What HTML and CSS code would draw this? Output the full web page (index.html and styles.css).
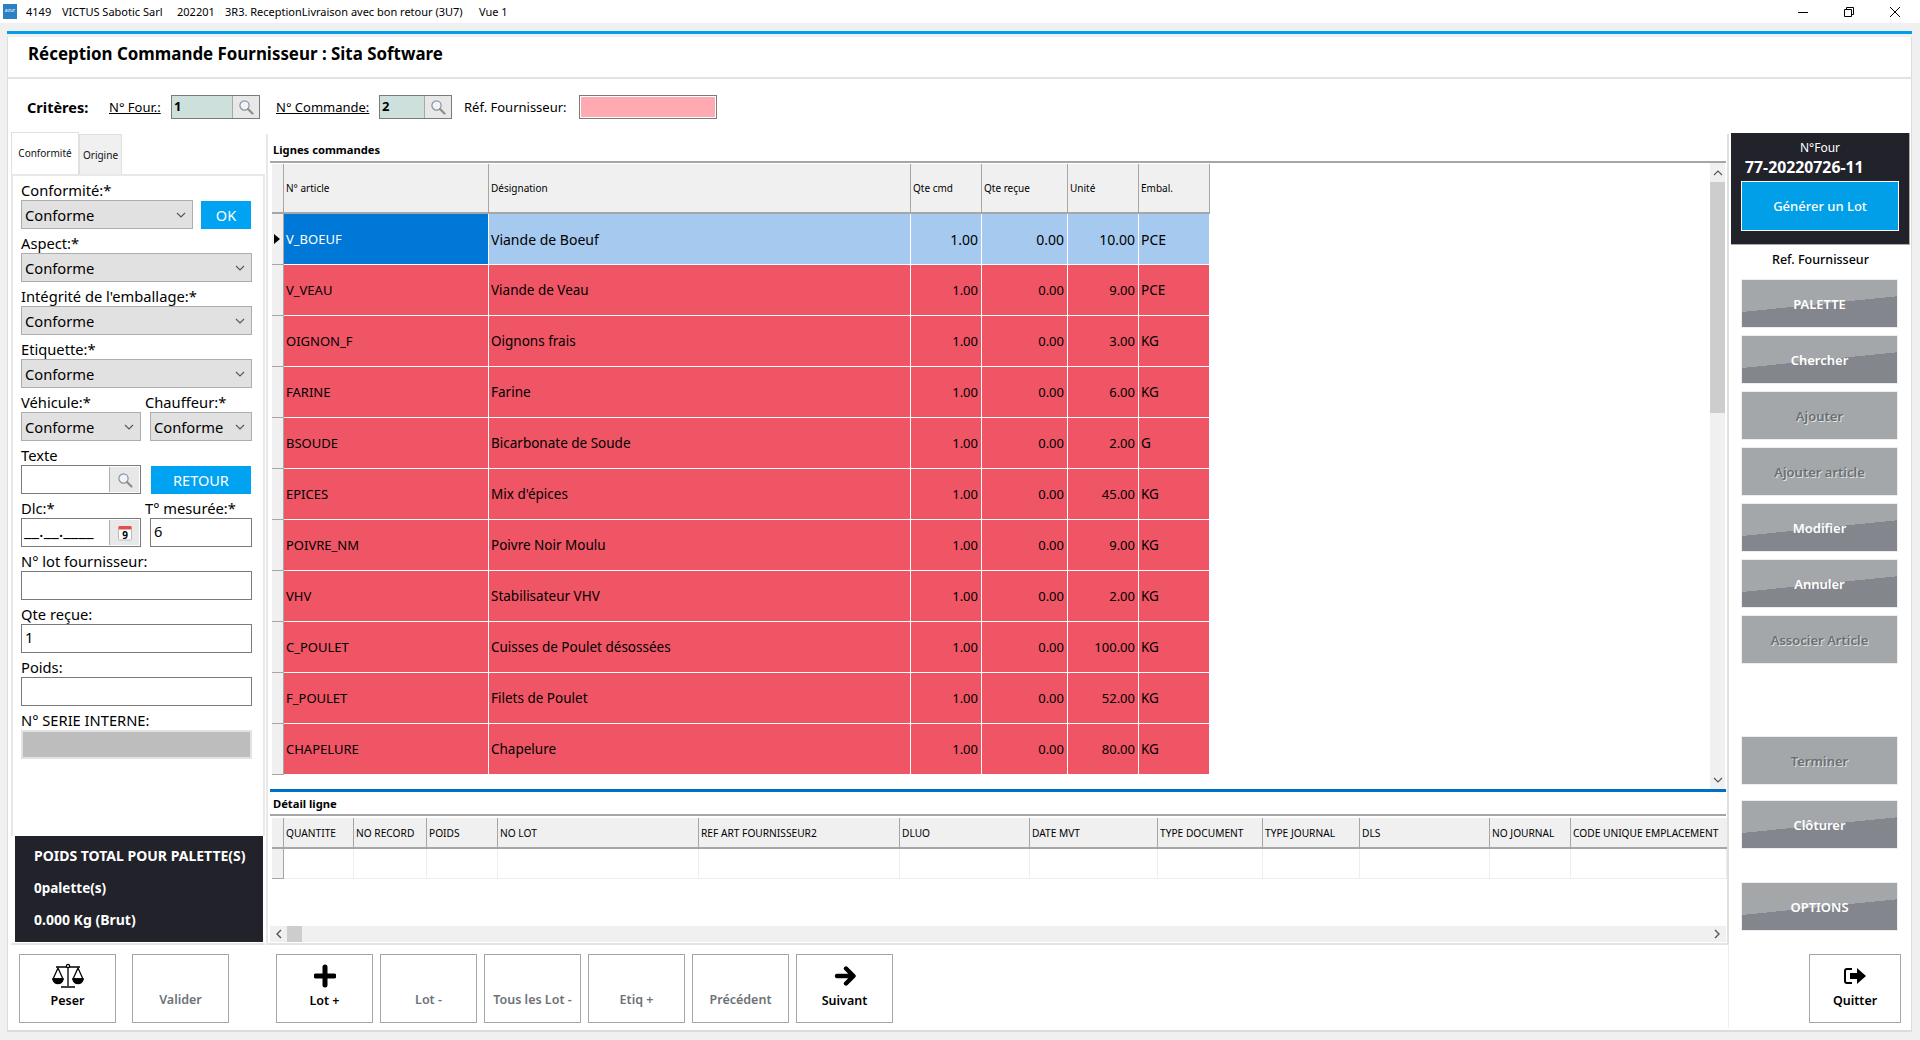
FILE: index.html
```html
<!DOCTYPE html>
<html lang="fr">
<head>
    <meta charset="UTF-8">
    <meta name="viewport" content="width=device-width, initial-scale=1.0">
    <title>Réception Commande Fournisseur</title>
    <link rel="stylesheet" href="styles.css">
</head>
<body>
    <svg class="defs" width="0" height="0">
        <symbol id="chevron" viewBox="0 0 10 6"><path d="M1 1l4 4 4-4" fill="none" stroke="#555" stroke-width="1.1"/></symbol>
        <symbol id="loupe" viewBox="0 0 16 16">
            <circle cx="6.5" cy="6.5" r="4.6" fill="#eef4fa" stroke="#8a9299" stroke-width="1.2"/>
            <path d="M10 10l4.5 4.5" stroke="#8f8f8f" stroke-width="2.2" stroke-linecap="round"/>
        </symbol>
    </svg>

    <div class="titlebar">
        <div class="logo">azur</div>
        <span class="t1">4149</span>
        <span class="t2">VICTUS Sabotic Sarl</span>
        <span class="t3">202201</span>
        <span class="t4">3R3. ReceptionLivraison avec bon retour (3U7)</span>
        <span>Vue 1</span>
        <div class="winctl">
            <svg width="12" height="12" viewBox="0 0 12 12"><path d="M1 6.5h10" stroke="#000"/></svg>
            <svg width="12" height="12" viewBox="0 0 12 12"><path d="M1.5 3.5h7v7h-7zM3.5 3.5v-2h7v7h-2" fill="none" stroke="#000"/></svg>
            <svg width="12" height="12" viewBox="0 0 12 12"><path d="M1 1l10 10M11 1L1 11" stroke="#000"/></svg>
        </div>
    </div>

    <div class="window">
        <div class="head"><h1>Réception Commande Fournisseur : Sita Software</h1></div>

        <div class="criteres">
            <b class="crit-title">Critères:</b>
            <a class="crit-link link-four">N° Four.:</a>
            <div class="lookup lookup-four">
                <span class="lookup-val">1</span>
                <span class="lookup-btn"><svg width="16" height="16"><use href="#loupe"/></svg></span>
            </div>
            <a class="crit-link link-cmd">N° Commande:</a>
            <div class="lookup lookup-cmd">
                <span class="lookup-val">2</span>
                <span class="lookup-btn"><svg width="16" height="16"><use href="#loupe"/></svg></span>
            </div>
            <span class="crit-ref">Réf. Fournisseur:</span>
            <div class="pink-input"></div>
        </div>

        <div class="work">
            <div class="left">
                <div class="tabs">
                    <div class="tab tab-on">Conformité</div>
                    <div class="tab">Origine</div>
                </div>
                <div class="tabpage">
                    <div class="field">
                        <label>Conformité:*</label>
                        <div class="line">
                            <div class="combo combo-ok">Conforme<svg width="10" height="6"><use href="#chevron"/></svg></div>
                            <button class="blue-btn ok-btn">OK</button>
                        </div>
                    </div>
                    <div class="field">
                        <label>Aspect:*</label>
                        <div class="combo">Conforme<svg width="10" height="6"><use href="#chevron"/></svg></div>
                    </div>
                    <div class="field">
                        <label>Intégrité de l'emballage:*</label>
                        <div class="combo">Conforme<svg width="10" height="6"><use href="#chevron"/></svg></div>
                    </div>
                    <div class="field">
                        <label>Etiquette:*</label>
                        <div class="combo">Conforme<svg width="10" height="6"><use href="#chevron"/></svg></div>
                    </div>
                    <div class="two">
                        <div class="field">
                            <label>Véhicule:*</label>
                            <div class="combo">Conforme<svg width="10" height="6"><use href="#chevron"/></svg></div>
                        </div>
                        <div class="field">
                            <label class="pull">Chauffeur:*</label>
                            <div class="combo">Conforme<svg width="10" height="6"><use href="#chevron"/></svg></div>
                        </div>
                    </div>
                    <div class="two">
                        <div class="field">
                            <label>Texte</label>
                            <div class="txt with-btn">
                                <span class="txt-val"></span>
                                <span class="txt-btn"><svg width="16" height="16"><use href="#loupe"/></svg></span>
                            </div>
                        </div>
                        <div class="field">
                            <label>&nbsp;</label>
                            <button class="blue-btn retour-btn">RETOUR</button>
                        </div>
                    </div>
                    <div class="two">
                        <div class="field">
                            <label>Dlc:*</label>
                            <div class="txt with-btn">
                                <span class="txt-val date-mask">__.__.____</span>
                                <span class="txt-btn">
                                    <svg width="16" height="16" viewBox="0 0 16 16">
                                        <rect x="1.5" y="2" width="13" height="13" rx="1" fill="#fff" stroke="#bbb"/>
                                        <rect x="1.5" y="1" width="13" height="3.5" rx="1" fill="#e0504a"/>
                                        <text x="8" y="13.5" class="cal-num">9</text>
                                    </svg>
                                </span>
                            </div>
                        </div>
                        <div class="field">
                            <label class="pull">T° mesurée:*</label>
                            <div class="txt">6</div>
                        </div>
                    </div>
                    <div class="field">
                        <label>N° lot fournisseur:</label>
                        <div class="txt"></div>
                    </div>
                    <div class="field">
                        <label>Qte reçue:</label>
                        <div class="txt">1</div>
                    </div>
                    <div class="field">
                        <label>Poids:</label>
                        <div class="txt"></div>
                    </div>
                    <div class="field">
                        <label>N° SERIE INTERNE:</label>
                        <div class="txt txt-off"></div>
                    </div>
                </div>
                <div class="total">
                    <div>POIDS TOTAL POUR PALETTE(S)</div>
                    <div class="total-count">0palette(s)</div>
                    <div>0.000 Kg (Brut)</div>
                </div>
            </div>

            <div class="center">
                <div class="sec-title sec-lignes">Lignes commandes</div>
                <div class="grid-wrap">
                    <table class="lines">
                        <thead>
                            <tr><th class="rh"></th><th class="c-art">N° article</th><th class="c-des">Désignation</th><th class="c-qty">Qte cmd</th><th class="c-rec">Qte reçue</th><th class="c-qty">Unité</th><th class="c-qty">Embal.</th></tr>
                        </thead>
                        <tbody>
                            <tr class="sel"><td class="rh"><i class="cursor"></i></td><td class="cur">V_BOEUF</td><td>Viande de Boeuf</td><td class="n">1.00</td><td class="n">0.00</td><td class="n">10.00</td><td>PCE</td></tr>
                            <tr><td class="rh"></td><td class="code">V_VEAU</td><td>Viande de Veau</td><td class="n">1.00</td><td class="n">0.00</td><td class="n">9.00</td><td>PCE</td></tr>
                            <tr><td class="rh"></td><td class="code">OIGNON_F</td><td>Oignons frais</td><td class="n">1.00</td><td class="n">0.00</td><td class="n">3.00</td><td>KG</td></tr>
                            <tr><td class="rh"></td><td class="code">FARINE</td><td>Farine</td><td class="n">1.00</td><td class="n">0.00</td><td class="n">6.00</td><td>KG</td></tr>
                            <tr><td class="rh"></td><td class="code">BSOUDE</td><td>Bicarbonate de Soude</td><td class="n">1.00</td><td class="n">0.00</td><td class="n">2.00</td><td>G</td></tr>
                            <tr><td class="rh"></td><td class="code">EPICES</td><td>Mix d'épices</td><td class="n">1.00</td><td class="n">0.00</td><td class="n">45.00</td><td>KG</td></tr>
                            <tr><td class="rh"></td><td class="code">POIVRE_NM</td><td>Poivre Noir Moulu</td><td class="n">1.00</td><td class="n">0.00</td><td class="n">9.00</td><td>KG</td></tr>
                            <tr><td class="rh"></td><td class="code">VHV</td><td>Stabilisateur VHV</td><td class="n">1.00</td><td class="n">0.00</td><td class="n">2.00</td><td>KG</td></tr>
                            <tr><td class="rh"></td><td class="code">C_POULET</td><td>Cuisses de Poulet désossées</td><td class="n">1.00</td><td class="n">0.00</td><td class="n">100.00</td><td>KG</td></tr>
                            <tr><td class="rh"></td><td class="code">F_POULET</td><td>Filets de Poulet</td><td class="n">1.00</td><td class="n">0.00</td><td class="n">52.00</td><td>KG</td></tr>
                            <tr><td class="rh"></td><td class="code">CHAPELURE</td><td>Chapelure</td><td class="n">1.00</td><td class="n">0.00</td><td class="n">80.00</td><td>KG</td></tr>
                        </tbody>
                    </table>
                    <div class="vscroll">
                        <svg width="10" height="6" class="flip"><use href="#chevron"/></svg>
                        <div class="vthumb"></div>
                        <svg width="10" height="6" class="vdown"><use href="#chevron"/></svg>
                    </div>
                </div>

                <div class="sec-title sec-detail">Détail ligne</div>
                <table class="detail">
                    <thead>
                        <tr>
                            <th class="rh"></th><th class="w70">QUANTITE</th><th class="w73">NO RECORD</th><th class="w71">POIDS</th><th class="w201">NO LOT</th><th class="w201">REF ART FOURNISSEUR2</th><th class="w130">DLUO</th><th class="w128">DATE MVT</th><th class="w105">TYPE DOCUMENT</th><th class="w97">TYPE JOURNAL</th><th class="w130">DLS</th><th class="w81">NO JOURNAL</th><th class="w156">CODE UNIQUE EMPLACEMENT</th>
                        </tr>
                    </thead>
                    <tbody>
                        <tr><td class="rh"></td><td></td><td></td><td></td><td></td><td></td><td></td><td></td><td></td><td></td><td></td><td></td><td></td></tr>
                    </tbody>
                </table>
                <div class="hscroll">
                    <svg width="6" height="10" class="h-left" viewBox="0 0 6 10"><path d="M5 1L1 5l4 4" fill="none" stroke="#555" stroke-width="1.4"/></svg>
                    <div class="hthumb"></div>
                    <svg width="6" height="10" class="h-right" viewBox="0 0 6 10"><path d="M1 1l4 4-4 4" fill="none" stroke="#555" stroke-width="1.4"/></svg>
                </div>
            </div>

            <div class="right">
                <div class="four-box">
                    <div class="four-label">N°Four</div>
                    <div class="four-val">77-20220726-11</div>
                    <button class="gen-btn">Générer un Lot</button>
                </div>
                <div class="ref-label">Ref. Fournisseur</div>
                <button class="side-btn on">PALETTE</button>
                <button class="side-btn on">Chercher</button>
                <button class="side-btn">Ajouter</button>
                <button class="side-btn">Ajouter article</button>
                <button class="side-btn on">Modifier</button>
                <button class="side-btn on">Annuler</button>
                <button class="side-btn">Associer Article</button>
                <button class="side-btn gap-term">Terminer</button>
                <button class="side-btn on gap-clot">Clôturer</button>
                <button class="side-btn on gap-opt">OPTIONS</button>
            </div>
        </div>

        <div class="actions">
            <button class="act on">
                <svg width="34" height="26" viewBox="0 0 34 26" fill="none" stroke="#000" stroke-width="1.3">
                    <path d="M17 3v20M10 24h14M5 4h24"/>
                    <circle cx="17" cy="3" r="1.6" fill="#fff"/>
                    <path d="M7 5L2 16h10zM27 5l-5 11h10z"/>
                    <path d="M2 16c0 6 10 6 10 0zM22 16c0 6 10 6 10 0z" fill="#000"/>
                </svg>
                <span>Peser</span>
            </button>
            <button class="act act-valider">Valider</button>
            <button class="act on act-lot">
                <svg width="22" height="22" viewBox="0 0 22 22"><path d="M11 2v18M2 11h18" stroke="#000" stroke-width="5" stroke-linecap="round"/></svg>
                <span>Lot +</span>
            </button>
            <button class="act">Lot -</button>
            <button class="act">Tous les Lot -</button>
            <button class="act">Etiq +</button>
            <button class="act">Précédent</button>
            <button class="act on">
                <svg width="22" height="22" viewBox="0 0 22 22" fill="none" stroke="#000" stroke-width="4.4" stroke-linecap="round" stroke-linejoin="round"><path d="M3 11h15M12 3.500l7.500 7.500-7.500 7.500"/></svg>
                <span>Suivant</span>
            </button>
            <div class="quit-zone">
                <button class="act on">
                    <svg width="24" height="20" viewBox="0 0 24 20"><path d="M9 3H4a2 2 0 0 0-2 2v10a2 2 0 0 0 2 2h5" fill="none" stroke="#000" stroke-width="2"/><path d="M7 7h7V2l9 8-9 8v-5H7z" fill="#000"/></svg>
                    <span>Quitter</span>
                </button>
            </div>
        </div>
    </div>
</body>
</html>
```

FILE: styles.css
```css
* {
    box-sizing: border-box;
}

body {
    margin: 0;
    height: 1040px;
    overflow: hidden;
    background-color: #f0f0f0;
    font-family: "Noto Sans", "Open Sans", sans-serif;
    color: #000;
}

.defs {
    display: block;
    height: 0;
}

button {
    font-family: inherit;
    cursor: pointer;
}

/* title bar */
.titlebar {
    height: 23px;
    background-color: #fff;
    display: flex;
    align-items: center;
    font-size: 11px;
    padding-left: 3px;
    white-space: nowrap;
}

.logo {
    width: 14px;
    height: 15px;
    background-color: #2b7fc3;
    color: #fff;
    font-size: 5px;
    line-height: 13px;
    text-align: center;
    margin-right: 9px;
}

.t1 { width: 36px; }
.t2 { width: 115px; }
.t3 { width: 48px; }
.t4 { width: 254px; }

.winctl {
    margin-left: auto;
    display: flex;
    gap: 34px;
    padding-right: 19px;
}

/* main window */
.window {
    margin: 8px 8px 0 7px;
    height: 1001px;
    background-color: #fff;
    border-top: 3px solid #009fe8;
    border-bottom: 2px solid #dcdcdc;
    box-shadow: inset 1px 0 #dcdcdc, inset -1px 0 #dcdcdc;
    display: flex;
    flex-direction: column;
}

.head {
    height: 45px;
    flex: none;
    border-bottom: 2px solid #e2e2e2;
    border-top: 3px solid #f0f0f0;
    padding-left: 21px;
    display: flex;
    align-items: center;
}

h1 {
    margin: 0 0 8px;
    font-size: 16.900px;
    font-weight: 700;
}

.criteres {
    height: 53px;
    flex: none;
    display: flex;
    align-items: center;
    font-size: 13px;
    padding-top: 3px;
    padding-left: 20px;
}

.crit-title {
    font-size: 14.500px;
    width: 82px;
}

.crit-link {
    text-decoration: underline;
}

.link-four { width: 62px; }
.link-cmd { width: 103px; }

.lookup {
    height: 24px;
    border: 1px solid #7a7a7a;
    display: flex;
    background-color: #e8e8e8;
}

.lookup-four {
    width: 89px;
    margin-right: 16px;
}

.lookup-cmd {
    width: 73px;
    margin-right: 12px;
}

.lookup-val {
    flex: 1;
    background-color: #cde0dc;
    font-weight: 700;
    font-size: 13px;
    padding-left: 2px;
    line-height: 20px;
    border-right: 1px solid #a8a8a8;
}

.lookup-btn {
    width: 26px;
    display: flex;
    align-items: center;
    justify-content: center;
}

.crit-ref { width: 115px; }

.pink-input {
    width: 138px;
    height: 24px;
    background-color: #ffa9b1;
    border: 1px solid #7a7a7a;
    box-shadow: inset 0 0 0 1px #fff;
}

.work {
    height: 813px;
    flex: none;
    display: flex;
}

/* left column */
.left {
    flex: none;
    width: 254px;
    margin-left: 4px;
    display: flex;
    flex-direction: column;
    border-bottom: 2px solid #e4e4e4;
}

.tabs {
    display: flex;
    align-items: flex-end;
    height: 42px;
    flex: none;
}

.tab {
    width: 43px;
    height: 40px;
    font-size: 10px;
    line-height: 41px;
    text-align: center;
    background-color: #f0f0f0;
    border: 1px solid #e0e0e0;
    border-bottom: 0;
    color: #111;
}

.tab-on {
    width: 68px;
    height: 42px;
    background-color: #fff;
    line-height: 41px;
}

.tabpage {
    height: 662px;
    flex: none;
    border: 2px solid #e8e8e8;
    border-bottom: 0;
    padding: 0 11px 0 8px;
}

.field label {
    display: block;
    height: 24px;
    line-height: 28px;
    font-size: 14.700px;
    white-space: nowrap;
}

.field label.pull {
    margin-left: -5px;
}

.line {
    display: flex;
    justify-content: space-between;
    width: 230px;
}

.combo {
    height: 29px;
    background-color: #e1e1e1;
    border: 1px solid #adadad;
    font-size: 14.700px;
    padding: 0 6px 0 3px;
    display: flex;
    align-items: center;
    justify-content: space-between;
}

.combo-ok {
    width: 172px;
}

.two {
    display: grid;
    grid-template-columns: 120px 102px;
    column-gap: 9px;
}

.blue-btn {
    border: 0;
    background-color: #00a2f2;
    color: #fff;
    font-size: 14.500px;
    padding: 0;
}

.ok-btn {
    width: 50px;
    height: 28px;
    margin-top: 1px;
}

.retour-btn {
    display: block;
    width: 100px;
    height: 28px;
    margin: 1px 0 0 1px;
}

.txt {
    height: 29px;
    border: 1px solid #7a7a7a;
    background-color: #fff;
    font-size: 14.700px;
    line-height: 24px;
    padding-left: 3px;
}

.with-btn {
    display: flex;
    padding-left: 0;
}

.txt-val {
    flex: 1;
    padding-left: 2px;
}

.date-mask {
    font-size: 17px;
    white-space: nowrap;
    overflow: hidden;
}

.txt-btn {
    flex: none;
    width: 30px;
    margin: 1px;
    background-color: #e8e8e8;
    border-left: 1px solid #b0b0b0;
    display: flex;
    align-items: center;
    justify-content: center;
}

.cal-num {
    font-size: 10px;
    font-weight: 700;
    text-anchor: middle;
}

.txt-off {
    background-color: #bdbdbd;
    border: 2px solid #e2e2e2;
}

.total {
    width: 248px;
    height: 106px;
    flex: none;
    margin: 0 0 1px 4px;
    padding: 4px 0 0 19px;
    background-color: #21222a;
    color: #fff;
    font-size: 14px;
    font-weight: 700;
}

.total div {
    height: 32px;
    line-height: 32px;
}

.total .total-count {
    font-size: 13.500px;
}

/* center column */
.center {
    flex: none;
    width: 1463px;
    height: 811px;
    margin: 2px 0 0 1px;
    padding-left: 3px;
    border-left: 2px solid #e8e8e8;
    border-right: 2px solid #e0e0e0;
    border-bottom: 2px solid #e4e4e4;
    display: flex;
    flex-direction: column;
}

.sec-title {
    flex: none;
    font-size: 11.200px;
    font-weight: 700;
    padding-left: 3px;
    border-bottom: 2px solid #a6a6a6;
    margin-left: -1px;
    margin-right: 1px;
}

.sec-lignes {
    height: 29px;
    line-height: 31px;
}

.grid-wrap {
    height: 626px;
    flex: none;
    display: flex;
    justify-content: space-between;
}

table {
    border-collapse: separate;
    border-spacing: 0;
    table-layout: fixed;
}

th {
    background-color: #f0f0f0;
    font-weight: 400;
    text-align: left;
    padding: 0 0 0 2px;
    white-space: nowrap;
    overflow: hidden;
}

.lines {
    width: 938px;
    height: 611px;
    margin: 1px 0 0 1px;
}

.lines th {
    height: 50px;
    font-size: 10px;
    border-right: 1px solid #a6a6a6;
    border-bottom: 2px solid #a6a6a6;
}

.lines th.rh {
    width: 12px;
}

.c-art { width: 205px; }
.c-des { width: 422px; }
.c-qty { width: 71px; }
.c-rec { width: 86px; }

.lines td {
    height: 51px;
    background-color: #ef5565;
    font-size: 13.500px;
    padding: 0 0 0 2px;
    border-right: 1px solid #fff;
    border-bottom: 1px solid #fff;
    white-space: nowrap;
    overflow: hidden;
}

.lines td.code {
    font-size: 13px;
}

.lines td.n {
    font-size: 13px;
    text-align: right;
    padding: 0 3px 0 0;
}

.lines td.rh,
.detail td.rh {
    background-color: #f0f0f0;
    border-right: 1px solid #a6a6a6;
    border-bottom: 1px solid #a6a6a6;
    padding: 0;
    width: 12px;
}

.lines .sel td {
    background-color: #a6c9ef;
    font-size: 14px;
}

.lines .sel td.cur {
    background-color: #0078d7;
    color: #fff;
    font-size: 13px;
}

.lines .sel td.rh {
    background-color: #f0f0f0;
}

.cursor {
    display: block;
    width: 0;
    height: 0;
    margin-left: 2px;
    border-left: 6px solid #000;
    border-top: 5px solid transparent;
    border-bottom: 5px solid transparent;
}

.vscroll {
    width: 15px;
    background-color: #f0f0f0;
    margin-right: 2px;
    display: flex;
    flex-direction: column;
    align-items: center;
}

.vscroll .flip {
    transform: rotate(180deg);
    margin-top: 7px;
    height: 6px;
}

.vthumb {
    width: 15px;
    height: 231px;
    margin-top: 6px;
    background-color: #cdcdcd;
}

.vdown {
    margin-top: auto;
    margin-bottom: 6px;
}

.sec-detail {
    border-top: 3px solid #0070c0;
    height: 27px;
    line-height: 24px;
}

.detail {
    width: 1455px;
    margin: 2px 0 0 1px;
}

.detail th {
    height: 31px;
    font-size: 10.200px;
    border-right: 1px solid #a6a6a6;
    border-bottom: 2px solid #a6a6a6;
}

.detail th:last-child {
    border-right: 0;
}

.detail th.rh {
    width: 12px;
}

.detail td {
    height: 30px;
    border-right: 1px solid #eee;
    border-bottom: 1px solid #eee;
}

.w70 { width: 70px; }
.w73 { width: 73px; }
.w71 { width: 71px; }
.w201 { width: 201px; }
.w130 { width: 130px; }
.w128 { width: 128px; }
.w105 { width: 105px; }
.w97 { width: 97px; }
.w81 { width: 81px; }
.w156 { width: 156px; }

.hscroll {
    margin-top: auto;
    margin-bottom: 1px;
    height: 16px;
    flex: none;
    margin-left: -1px;
    margin-right: 1px;
    background-color: #f0f0f0;
    display: flex;
    align-items: center;
}

.h-left {
    margin: 0 5px 0 6px;
}

.hthumb {
    width: 15px;
    height: 16px;
    background-color: #cdcdcd;
}

.h-right {
    margin-left: auto;
    margin-right: 6px;
}

/* right column */
.right {
    flex: none;
    width: 183px;
    padding-left: 2px;
    display: flex;
    flex-direction: column;
}

.four-box {
    flex: none;
    width: 179px;
    height: 112px;
    margin-top: 1px;
    background-color: #21222a;
    border-right: 1px solid #aaa;
    border-bottom: 1px solid #aaa;
    color: #fff;
    text-align: center;
    padding-top: 6px;
}

.four-label {
    font-size: 12px;
    line-height: 17px;
}

.four-val {
    font-size: 15.800px;
    font-weight: 700;
    line-height: 22px;
    text-align: left;
    padding-left: 14px;
}

.gen-btn {
    display: block;
    width: 158px;
    height: 50px;
    margin: 3px 0 0 10px;
    background-color: #009fe8;
    border: 1px solid #fff;
    color: #fff;
    font-size: 13px;
    font-weight: 500;
}

.ref-label {
    flex: none;
    font-size: 12.500px;
    font-weight: 500;
    height: 34px;
    line-height: 30px;
    text-align: center;
    color: #000;
    width: 179px;
}

.side-btn {
    flex: none;
    width: 157px;
    height: 49px;
    margin: 0 0 7px 10px;
    border: 1px solid #eee;
    background-color: #a3a7aa;
    color: #6b6f72;
    text-shadow: 1px 1px 0 #dfe1e2;
    font-size: 13px;
    font-weight: 600;
    padding: 0;
}

.side-btn.on {
    background-image: linear-gradient(174.2deg, #a3a7aa 51%, #83868c 51%);
    color: #fff;
    text-shadow: none;
}

.gap-term { margin-top: 65px; }
.gap-clot { margin-top: 8px; }
.gap-opt { margin-top: 26px; }

/* bottom buttons */
.actions {
    flex: 1;
    display: flex;
    gap: 7px;
    padding: 9px 0 0 12px;
}

.act {
    flex: none;
    width: 97px;
    height: 69px;
    background-color: #fff;
    border: 1px solid #a6a6a6;
    color: #6d7278;
    font-size: 12.500px;
    font-weight: 600;
    padding: 36px 0 0;
    display: flex;
    flex-direction: column;
    align-items: center;
    justify-content: flex-start;
}

.act.on {
    color: #000;
    padding-top: 8px;
}

.act.on svg {
    flex: none;
    height: 26px;
    margin-bottom: 3px;
}

.act-valider {
    margin: 0 40px 0 9px;
}

.quit-zone {
    margin-left: auto;
    margin-top: -9px;
    padding-top: 9px;
    width: 184px;
    height: 83px;
    border-left: 1px solid #eee;
    padding-left: 80px;
}

.quit-zone .act {
    width: 92px;
}
```
